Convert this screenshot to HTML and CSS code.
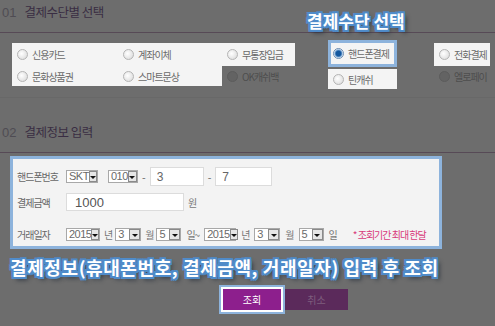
FILE: index.html
```html
<!DOCTYPE html>
<html>
	<head>
		<meta charset="UTF-8">
		<title>결제수단 선택</title>
		<link rel="stylesheet" href="styles.css">
	</head>
	<body>
		<div class="page">
			<div class="tit">
				<span class="num">01</span>결제수단별 선택
				<span class="tip tip-top">결제수단 선택</span>
			</div>
			<div class="pay-area">
				<ul class="pay-list">
					<li class="on"><i class="radio"></i>신용카드</li>
					<li class="on"><i class="radio"></i>계좌이체</li>
					<li class="on short"><i class="radio"></i>무통장입금</li>
					<li class="on sel"><i class="radio checked"></i>핸드폰결제</li>
					<li class="on tel"><i class="radio"></i>전화결제</li>
					<li class="on"><i class="radio"></i>문화상품권</li>
					<li class="on"><i class="radio"></i>스마트문상</li>
					<li class="off"><i class="radio"></i>OK캐쉬백</li>
					<li class="on teen"><i class="radio"></i>틴캐쉬</li>
					<li class="off"><i class="radio"></i>엘로페이</li>
				</ul>
			</div>

			<div class="tit">
				<span class="num">02</span>결제정보 입력
			</div>
			<div class="info">
				<div class="row r1">
					<span class="lb">핸드폰번호</span>
					<span class="sbox w32"><span class="sv">SKT</span><i class="arr"></i></span>
					<span class="sbox w30 gap10"><span class="sv">010</span><i class="arr"></i></span>
					<span class="dash">-</span>
					<span class="ipt w54">3</span>
					<span class="dash">-</span>
					<span class="ipt w57">7</span>
				</div>
				<div class="row r2">
					<span class="lb">결제금액</span>
					<span class="ipt money">1000</span>
					<span class="unit">원</span>
				</div>
				<div class="row r3">
					<span class="lb">거래일자</span>
					<span class="sbox w34"><span class="sv">2015</span><i class="arr"></i></span>
					<span class="unit">년</span>
					<span class="sbox w26"><span class="sv">3</span><i class="arr"></i></span>
					<span class="unit">월</span>
					<span class="sbox w25"><span class="sv">5</span><i class="arr"></i></span>
					<span class="unit wide">일~</span>
					<span class="sbox w32"><span class="sv">2015</span><i class="arr"></i></span>
					<span class="unit wide">년</span>
					<span class="sbox w26"><span class="sv">3</span><i class="arr"></i></span>
					<span class="unit wide">월</span>
					<span class="sbox w25"><span class="sv">5</span><i class="arr"></i></span>
					<span class="unit wide">일</span>
					<span class="note">* 조회기간 최대 한달</span>
				</div>
			</div>

			<p class="tip tip-bottom">결제정보(휴대폰번호, 결제금액, 거래일자) 입력 후 조회</p>

			<div class="btns">
				<a href="javascript:;" class="btn-ok">조회</a>
				<a href="javascript:;" class="btn-cancel">취소</a>
			</div>
		</div>
	</body>
</html>
```

FILE: styles.css
```css
*{
	margin: 0;
	padding: 0;
}
li{
	list-style: none;
}
body{
	background: #6d6d6d;
	font-family: "Noto Sans CJK KR", "Liberation Sans", sans-serif;
}
.page{
	width: 495px;
	height: 326px;
	overflow: hidden;
}
/* 섹션 제목 */
.tit{
	position: relative;
	height: 33px;
	box-sizing: border-box;
	border-bottom: 1px solid #574a56;
	padding: 3px 0 0 2px;
	font-size: 12.5px;
	line-height: 18px;
	letter-spacing: -.5px;
	color: #3a2d43;
}
.tit .num{
	font-family: "Liberation Sans", sans-serif;
	font-size: 13px;
	letter-spacing: 0;
	color: #4f4c53;
	margin-right: 8px;
}
/* 안내 문구 */
.tip{
	color: #fff;
	font-weight: bold;
	font-size: 17px;
	white-space: nowrap;
	text-shadow: 2px 0 0 #4f8bc9, -2px 0 0 #4f8bc9, 0 2px 0 #4f8bc9, 0 -2px 0 #4f8bc9,
		1px 1px 0 #4f8bc9, -1px -1px 0 #4f8bc9, 1px -1px 0 #4f8bc9, -1px 1px 0 #4f8bc9,
		2px 2px 0 #4f8bc9, -2px 2px 0 #4f8bc9, 2px -2px 0 #4f8bc9, -2px -2px 0 #4f8bc9,
		3px 3px 4px rgba(20,30,45,.8);
}
.tip-top{
	position: absolute;
	left: 307px;
	top: 10px;
	line-height: 22px;
	letter-spacing: 0;
}
.tip-bottom{
	margin: 7px 0 0 10px;
	font-size: 18px;
	line-height: 23px;
	letter-spacing: .6px;
}
/* 결제수단 */
.pay-area{
	padding-bottom: 11px;
	border-bottom: 1px solid #686868;
	margin-bottom: 22px;
}
.pay-list{
	display: grid;
	grid-template-columns: 106px 104px 106px 106px 1fr;
	grid-template-rows: 23px 20px;
	margin: 10px 0 0 12px;
}
.pay-list li{
	display: flex;
	align-items: center;
	box-sizing: border-box;
	padding-left: 5px;
	font-size: 10px;
	letter-spacing: -1px;
	white-space: nowrap;
}
.pay-list .on{
	background: #f4f4f4;
	color: #6a6a6a;
}
.pay-list .off{
	color: #4d4d4d;
}
.pay-list .short{
	justify-self: start;
	width: 73px;
}
.pay-list .sel{
	justify-self: start;
	align-self: start;
	width: 69px;
	height: 27px;
	margin-top: -3px;
	border: 3px solid #8db3dc;
	padding-left: 2px;
}
.pay-list .tel{
	justify-self: start;
	width: 56px;
}
.pay-list .teen{
	justify-self: start;
	align-self: start;
	width: 69px;
	height: 20px;
	margin-top: 3px;
}
.radio{
	width: 9px;
	height: 9px;
	border-radius: 50%;
	border: 1px solid #b4b4b4;
	background: radial-gradient(circle at 40% 40%, #fff, #d6d6d6);
	margin-right: 4px;
	flex: none;
}
.radio.checked{
	border-color: #6a8bb0;
	background: radial-gradient(circle, #14579e 0, #14579e 2.5px, #6fa0d2 3.5px, #e9f0f8 4.5px);
}
.off .radio{
	border-color: #5c5c5c;
	background: #636363;
}
/* 결제정보 */
.info{
	margin: 3px 0 0 10px;
	width: 432px;
	height: 93px;
	box-sizing: border-box;
	border: 3px solid #8db3dc;
	background: #f3f3f3;
	padding: 8px 0 0 4px;
}
.row{
	display: flex;
	align-items: center;
	white-space: nowrap;
}
.r1{
	height: 19px;
	margin-bottom: 7px;
}
.r2{
	height: 18px;
	margin-bottom: 17px;
}
.r3{
	height: 13px;
}
.lb{
	width: 49px;
	font-size: 10px;
	letter-spacing: -1px;
	color: #666;
}
.sbox{
	display: inline-flex;
	align-items: center;
	justify-content: space-between;
	height: 13px;
	box-sizing: border-box;
	border: 1px solid #a8a8a8;
	background: #fff;
	padding-left: 2px;
	font-family: "Liberation Sans", sans-serif;
	font-size: 11px;
	letter-spacing: -.5px;
	color: #6a6a6a;
}
.sbox .sv{
	line-height: 11px;
}
.arr{
	width: 11px;
	height: 11px;
	box-sizing: border-box;
	border: 1px solid #8a8a8a;
	background: #e6e6e6;
	display: flex;
	align-items: flex-end;
	justify-content: center;
	padding-bottom: 2px;
}
.arr::after{
	content: "";
	border-left: 3px solid transparent;
	border-right: 3px solid transparent;
	border-top: 3px solid #111;
}
.w25{ width: 25px; }
.w26{ width: 26px; }
.w30{ width: 30px; }
.w32{ width: 32px; }
.w34{ width: 34px; }
.gap10{
	margin-left: 10px;
}
.dash{
	margin: 0 4px;
	font-family: "Liberation Sans", sans-serif;
	font-size: 11px;
	color: #777;
}
.ipt{
	display: flex;
	align-items: center;
	height: 19px;
	box-sizing: border-box;
	border: 1px solid #dcdcdc;
	background: #fff;
	padding-left: 6px;
	font-family: "Liberation Sans", sans-serif;
	font-size: 12px;
	color: #666;
}
.w54{ width: 54px; }
.w57{ width: 57px; }
.ipt.money{
	width: 118px;
	height: 18px;
	padding-left: 8px;
	font-size: 13px;
	color: #555;
}
.unit{
	margin: 0 3px 0 4px;
	font-size: 10px;
	letter-spacing: -1px;
	color: #777;
}
.unit.wide{
	margin: 0 5px 0 5px;
}
.note{
	margin-left: 11px;
	font-size: 10px;
	letter-spacing: -1px;
	color: #d8397a;
}
/* 버튼 */
.btns{
	display: flex;
	align-items: center;
	margin: 8px 0 0 221px;
}
.btns a{
	display: flex;
	align-items: center;
	justify-content: center;
	box-sizing: border-box;
	text-decoration: none;
	font-size: 10px;
}
.btn-ok{
	width: 62px;
	height: 25px;
	border: 2px solid #fff;
	background: #8d1f8d;
	color: #fff;
	box-shadow: 0 0 0 2px #8db3dc;
}
.btn-cancel{
	width: 63px;
	height: 21px;
	margin-left: 2px;
	background: #5b2a5b;
	color: #7e5e7e;
}
```
